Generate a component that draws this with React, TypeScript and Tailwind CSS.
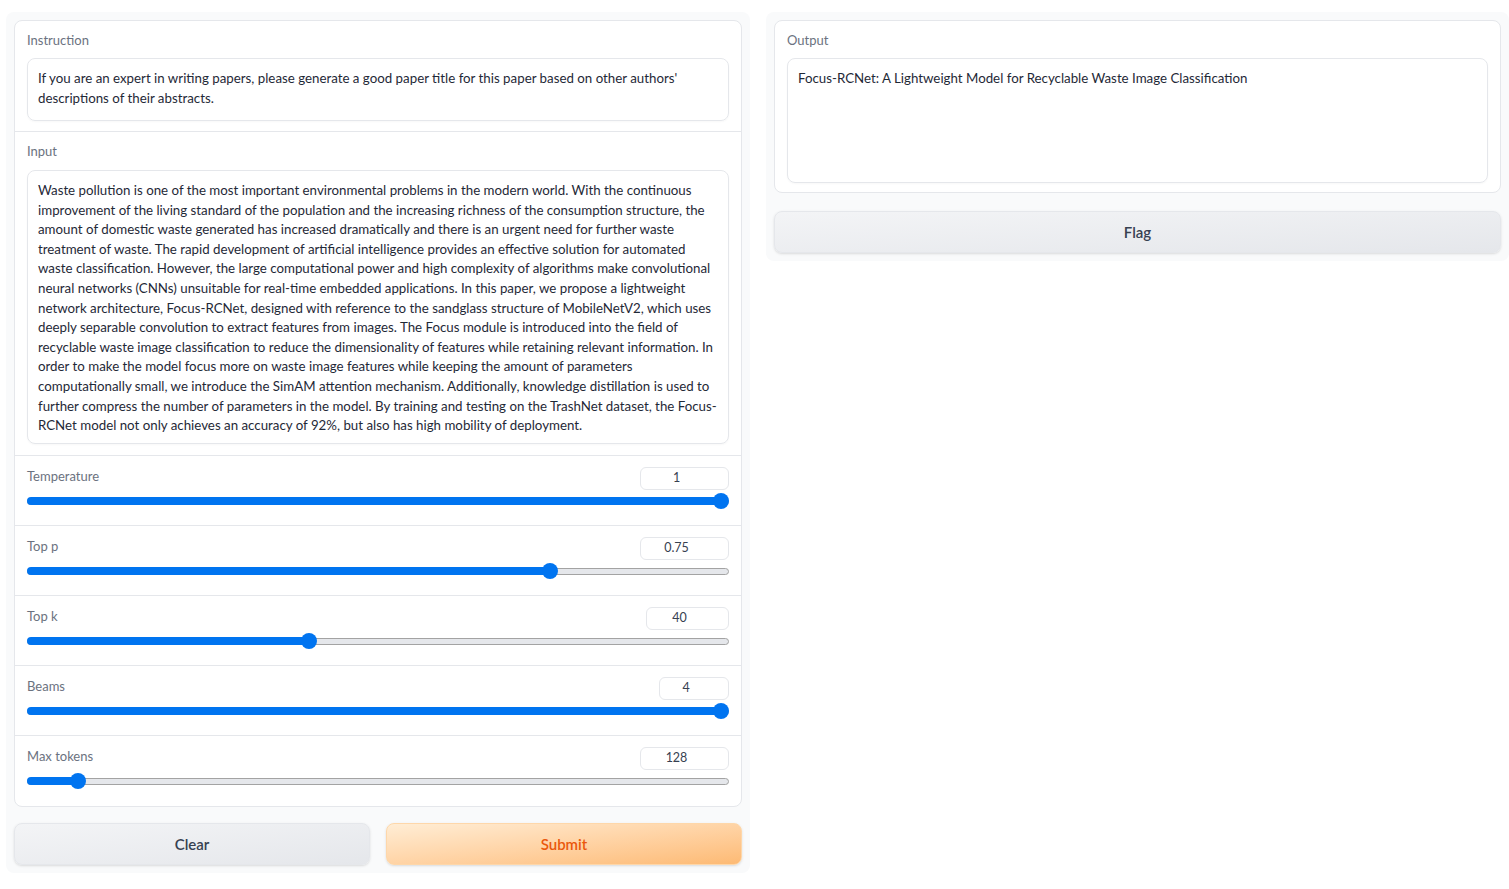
import React from 'react'

const font = { fontFamily: 'Lato, "Noto Sans", sans-serif' }

const instruction = [
  "If you are an expert in writing papers, please generate a good paper title for this paper based on other authors'",
  'descriptions of their abstracts.',
]

const abstract = [
  'Waste pollution is one of the most important environmental problems in the modern world. With the continuous',
  'improvement of the living standard of the population and the increasing richness of the consumption structure, the',
  'amount of domestic waste generated has increased dramatically and there is an urgent need for further waste',
  'treatment of waste. The rapid development of artificial intelligence provides an effective solution for automated',
  'waste classification. However, the large computational power and high complexity of algorithms make convolutional',
  'neural networks (CNNs) unsuitable for real-time embedded applications. In this paper, we propose a lightweight',
  'network architecture, Focus-RCNet, designed with reference to the sandglass structure of MobileNetV2, which uses',
  'deeply separable convolution to extract features from images. The Focus module is introduced into the field of',
  'recyclable waste image classification to reduce the dimensionality of features while retaining relevant information. In',
  'order to make the model focus more on waste image features while keeping the amount of parameters',
  'computationally small, we introduce the SimAM attention mechanism. Additionally, knowledge distillation is used to',
  'further compress the number of parameters in the model. By training and testing on the TrashNet dataset, the Focus-',
  'RCNet model not only achieves an accuracy of 92%, but also has high mobility of deployment.',
]

interface SliderProps {
  label: string
  value: string
  pct: number
  boxW: string
}

const sliders: SliderProps[] = [
  { label: 'Temperature', value: '1', pct: 1, boxW: 'w-[89px]' },
  { label: 'Top p', value: '0.75', pct: 0.75, boxW: 'w-[89px]' },
  { label: 'Top k', value: '40', pct: 0.4, boxW: 'w-[83px]' },
  { label: 'Beams', value: '4', pct: 1, boxW: 'w-[70px]' },
  { label: 'Max tokens', value: '128', pct: 0.0625, boxW: 'w-[89px]' },
]

function Slider({ label, value, pct, boxW }: SliderProps) {
  return (
    <div className="border-t border-[#e5e7eb] px-[12px] pt-[11px] h-[70px]">
      <div className="flex items-center justify-between h-[22px]">
        <span className="text-[13px] text-[#6b7280] -mt-[2px]">{label}</span>
        <div className={`${boxW} h-[23px] border border-[#e5e7eb] rounded-[6px] flex items-center justify-center pr-[16px] text-[12.5px] text-[#374151]`}>
          {value}
        </div>
      </div>
      <div className="relative mt-[4px] h-[16px] flex items-center">
        <div className="w-full h-[7px] rounded-full bg-[#e5e7eb] border border-[#a3a3a3]" />
        <div
          className="absolute left-0 h-[8px] rounded-full bg-[#0074f0]"
          style={{ width: `calc(8px + (100% - 16px) * ${pct})` }}
        />
        <div
          className="absolute w-[16px] h-[16px] rounded-full bg-[#0074f0]"
          style={{ left: `calc((100% - 16px) * ${pct})` }}
        />
      </div>
    </div>
  )
}

function TextBox({ lines, h }: { lines: string[], h: string }) {
  return (
    <div className={`${h} border border-[#e5e7eb] rounded-[8px] px-[10px] pt-[10px] text-[13.3px] leading-[19.6px] text-[#1f2937] overflow-hidden shadow-[0_1px_2px_rgba(0,0,0,0.03)]`}>
      {lines.map((l, i) => (
        <div key={i} className="whitespace-nowrap">{l}</div>
      ))}
    </div>
  )
}

export default function App() {
  return (
    <div className="w-[1509px] h-[889px] bg-white pl-[6px] pt-[12px] flex gap-[16px] items-start overflow-hidden" style={font}>
      <div className="w-[744px] shrink-0 bg-[#f9fafb] rounded-[8px] p-[8px]">
        <div className="bg-white border border-[#e5e7eb] rounded-[8px] overflow-hidden pb-[1px]">
          <div className="px-[12px] pt-[10px] pb-[10px]">
            <div className="text-[13px] leading-[18px] text-[#6b7280] mb-[9px]">Instruction</div>
            <TextBox lines={instruction} h="h-[63px]" />
          </div>
          <div className="border-t border-[#e5e7eb] px-[12px] pt-[10px] pb-[11px]">
            <div className="text-[13px] leading-[18px] text-[#6b7280] mb-[10px]">Input</div>
            <TextBox lines={abstract} h="h-[274px]" />
          </div>
          {sliders.map(s => (
            <Slider key={s.label} {...s} />
          ))}
        </div>
        <div className="flex gap-[16px] mt-[16px]">
          <button className="flex-1 h-[42px] rounded-[8px] border border-[#e5e7eb] bg-gradient-to-br from-[#f3f4f6] to-[#e5e7eb] text-[15px] font-semibold text-[#374151] shadow-sm">
            Clear
          </button>
          <button className="flex-1 h-[42px] rounded-[8px] border border-[#fed7aa] bg-gradient-to-br from-[#ffedd5] to-[#fdba74] text-[15px] font-semibold text-[#ea580c] shadow-sm">
            Submit
          </button>
        </div>
      </div>
      <div className="flex-1 min-w-0 bg-[#f9fafb] rounded-[8px] p-[8px]">
        <div className="bg-white border border-[#e5e7eb] rounded-[8px] px-[12px] pt-[10px] pb-[9px]">
          <div className="text-[13px] leading-[18px] text-[#6b7280] mb-[9px]">Output</div>
          <TextBox lines={['Focus-RCNet: A Lightweight Model for Recyclable Waste Image Classification']} h="h-[125px]" />
        </div>
        <button className="w-full mt-[18px] h-[42px] rounded-[8px] border border-[#e5e7eb] bg-gradient-to-br from-[#f3f4f6] to-[#e5e7eb] text-[15px] font-semibold text-[#374151] shadow-sm">
          Flag
        </button>
      </div>
    </div>
  )
}
